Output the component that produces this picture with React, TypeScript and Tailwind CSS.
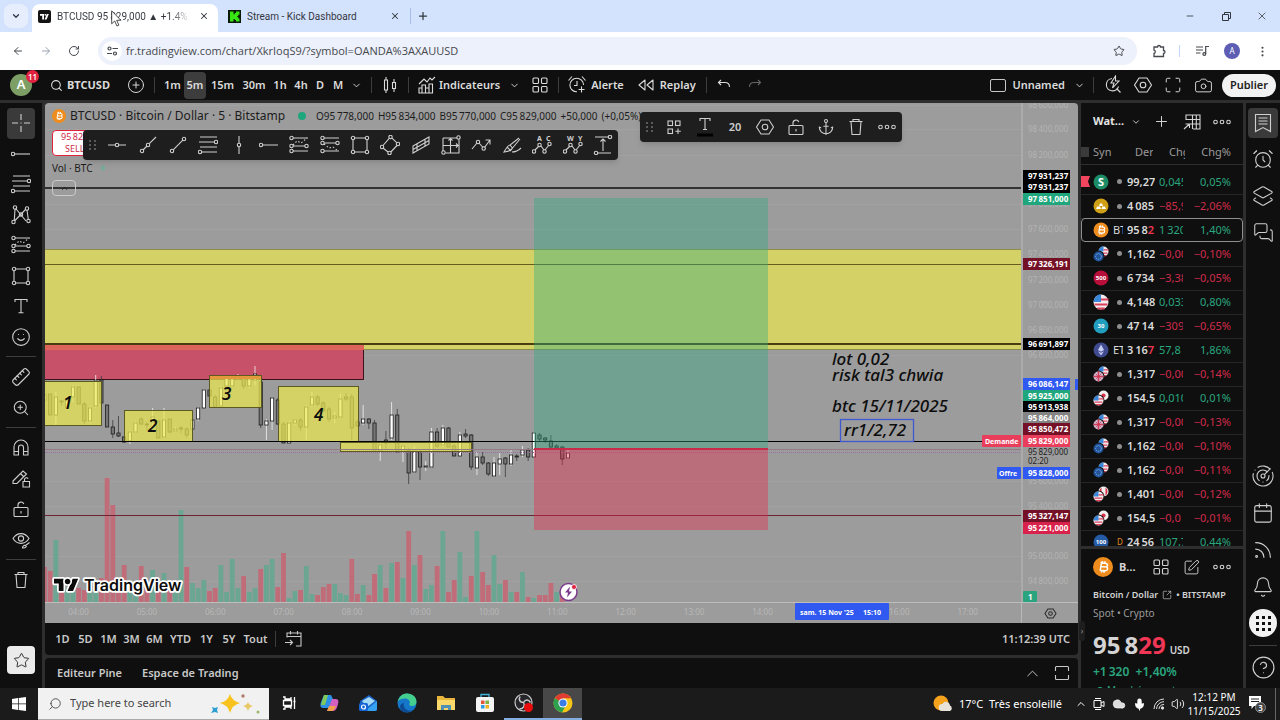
import type { ReactNode } from "react"
import {
  AlarmClock,
  Anchor,
  ArrowLeft,
  ArrowRight,
  Bell,
  Calendar,
  Camera,
  ChevronDown,
  ChevronUp,
  CirclePlus,
  CircleQuestionMark,
  Cloud,
  Layers2,
  LockOpen,
  Maximize,
  MessagesSquare,
  Mic,
  Minus,
  MoreVertical,
  Plus,
  Radar,
  RotateCw,
  Rss,
  Ruler,
  Search,
  Smile,
  SquareArrowOutUpRight,
  SquarePen,
  Star,
  Trash2,
  Volume2,
  X,
  ZoomIn,
} from "lucide-react"

const UP = "#6ba693"
const DOWN = "#c06c79"

// index, top of the bar, direction
const volumes: [number, number, string][] = [
  [0, 567, DOWN], [1, 571, DOWN], [2, 540, UP], [3, 590, DOWN], [4, 588, UP], [5, 592, UP], [6, 588, DOWN],
  [7, 590, DOWN], [8, 585, UP], [9, 590, UP], [10, 578, DOWN], [11, 478, DOWN], [12, 505, DOWN], [13, 586, DOWN],
  [14, 565, DOWN], [15, 592, UP], [16, 584, UP], [17, 566, DOWN], [18, 588, DOWN], [19, 570, UP], [20, 590, DOWN],
  [21, 573, UP], [22, 582, DOWN], [23, 590, UP], [24, 510, UP], [25, 567, DOWN], [26, 583, UP], [27, 588, UP],
  [28, 580, UP], [29, 591, DOWN], [30, 588, DOWN], [31, 565, UP], [32, 592, UP], [33, 559, UP], [34, 588, UP],
  [35, 576, DOWN], [36, 592, UP], [37, 588, UP], [38, 569, DOWN], [39, 565, UP], [40, 559, UP], [41, 587, DOWN],
  [42, 553, DOWN], [43, 598, UP], [44, 591, UP], [45, 590, DOWN], [46, 566, UP], [47, 594, UP], [48, 595, DOWN],
  [49, 587, DOWN], [50, 584, DOWN], [51, 584, UP], [52, 593, UP], [53, 595, UP], [54, 559, DOWN], [55, 594, DOWN],
  [56, 585, UP], [57, 595, DOWN], [58, 574, DOWN], [59, 565, UP], [60, 588, DOWN], [61, 563, UP], [62, 562, DOWN],
  [63, 578, UP], [64, 531, DOWN], [65, 565, UP], [66, 555, DOWN], [67, 589, UP], [68, 585, UP], [69, 566, DOWN],
  [70, 531, UP], [71, 592, DOWN], [72, 580, DOWN], [73, 552, UP], [74, 597, UP], [75, 576, DOWN], [76, 531, UP],
  [77, 572, DOWN], [78, 585, DOWN], [79, 555, UP], [80, 584, UP], [81, 580, DOWN], [82, 592, UP], [83, 592, DOWN],
  [84, 572, UP], [85, 597, DOWN], [86, 598, UP], [87, 595, DOWN], [88, 595, DOWN], [89, 583, DOWN], [90, 592, UP],
  [91, 594, DOWN],
]

// index, high, body top, body bottom, low, bullish
const candles: [number, number, number, number, number, boolean][] = [
  [0, 390, 395, 400, 402, true], [1, 394, 394, 415, 415, false], [2, 392, 397, 415, 425, true],
  [3, 400, 401, 402, 406, false], [4, 396, 400, 408, 410, true], [5, 385, 387, 397, 402, true],
  [6, 387, 387, 404, 404, false], [7, 402, 404, 421, 424, false], [8, 406, 408, 421, 423, true],
  [9, 375, 381, 406, 408, true], [10, 376, 380, 403, 403, false], [11, 405, 405, 427, 427, false],
  [12, 420, 427, 434, 438, false], [13, 416, 433, 436, 437, false], [14, 436, 437, 442, 443, false],
  [15, 430, 432, 441, 444, true], [16, 421, 423, 432, 433, true], [17, 417, 419, 424, 425, false],
  [18, 422, 424, 425, 431, false], [19, 408, 417, 422, 429, true], [20, 420, 421, 438, 438, false],
  [21, 408, 420, 437, 438, true], [22, 419, 419, 432, 433, false], [23, 427, 429, 431, 432, true],
  [24, 426, 428, 429, 433, false], [25, 427, 429, 435, 438, false], [26, 419, 420, 429, 440, true],
  [27, 407, 408, 419, 421, true], [28, 389, 390, 408, 408, true], [29, 390, 390, 396, 398, false],
  [30, 395, 397, 407, 407, false], [31, 386, 388, 406, 407, true], [32, 377, 378, 386, 388, true],
  [33, 377, 379, 386, 387, true], [34, 374, 377, 379, 380, true], [35, 377, 378, 386, 389, false],
  [36, 376, 379, 386, 388, true], [37, 366, 374, 380, 385, true], [38, 380, 382, 425, 428, false],
  [39, 419, 421, 425, 440, true], [40, 397, 398, 421, 430, true], [41, 398, 400, 424, 425, false],
  [42, 422, 424, 443, 443, false], [43, 421, 423, 443, 443, true], [44, 419, 420, 423, 425, true],
  [45, 418, 420, 427, 431, false], [46, 405, 407, 427, 440, true], [47, 392, 397, 405, 407, true],
  [48, 395, 397, 404, 406, false], [49, 401, 403, 411, 412, false], [50, 407, 409, 419, 422, false],
  [51, 412, 416, 418, 423, true], [52, 394, 399, 417, 418, true], [53, 393, 397, 399, 401, false],
  [54, 394, 397, 428, 440, false], [55, 420, 422, 426, 427, false], [56, 405, 419, 423, 425, true],
  [57, 418, 419, 423, 429, false], [58, 420, 423, 450, 450, false], [59, 443, 445, 451, 461, true],
  [60, 431, 440, 443, 450, false], [61, 402, 415, 438, 440, true], [62, 409, 415, 452, 453, false],
  [63, 445, 446, 451, 462, true], [64, 448, 450, 473, 484, false], [65, 446, 451, 472, 473, true],
  [66, 450, 452, 467, 480, false], [67, 461, 466, 467, 471, true], [68, 428, 432, 467, 468, true],
  [69, 428, 432, 446, 448, false], [70, 425, 428, 445, 447, true], [71, 427, 428, 447, 447, false],
  [72, 444, 446, 456, 456, false], [73, 432, 435, 456, 456, true], [74, 429, 434, 436, 438, false],
  [75, 434, 435, 467, 470, false], [76, 452, 457, 468, 475, true], [77, 452, 457, 463, 465, false],
  [78, 462, 463, 474, 476, false], [79, 457, 463, 476, 477, true], [80, 453, 459, 464, 475, true],
  [81, 457, 458, 464, 477, false], [82, 450, 455, 464, 466, true], [83, 454, 456, 457, 461, false],
  [84, 446, 450, 455, 457, true], [85, 448, 450, 457, 461, false], [86, 432, 433, 457, 457, true],
  [87, 433, 435, 439, 441, false], [88, 437, 438, 440, 443, false], [89, 435, 441, 447, 448, false],
  [90, 444, 446, 448, 448, false], [91, 446, 447, 459, 465, false], [92, 450, 453, 458, 459, true],
]

const gridPrices: [number, string][] = [
  [105, "98 600,000"], [129, "98 400,000"], [155, "98 200,000"], [204, "97 800,000"], [229, "97 600,000"],
  [254, "97 400,000"], [280, "97 200,000"], [305, "97 000,000"], [330, "96 800,000"], [355, "96 600,000"],
  [481, "95 600,000"], [506, "95 400,000"], [556, "95 000,000"], [581, "94 800,000"],
]

const priceTags: [number, string, string][] = [
  [176, "97 931,237", "#000"], [187, "97 931,237", "#000"], [199, "97 851,000", "#1fa67d"],
  [264, "97 326,191", "#741126"], [344, "96 691,897", "#000"], [384, "96 086,147", "#2f59f0"],
  [396, "95 925,000", "#1fa67d"], [407, "95 913,938", "#000"], [418, "95 864,000", "#848484"],
  [429, "95 850,472", "#741126"], [441, "95 829,000", "#e83e5c"], [473, "95 828,000", "#2f59f0"],
  [516, "95 327,147", "#741126"], [528, "95 221,000", "#d9224b"],
]

const hours = ["04:00", "05:00", "06:00", "07:00", "08:00", "09:00", "10:00", "11:00", "12:00", "13:00", "14:00", "", "16:00", "17:00"]

const watchlist = [
  { coin: "dxy", name: "", price: "99,27", chg: "0,045", pct: "0,05%", up: true },
  { coin: "gold", name: "", price: "4 085", chg: "−85,9", pct: "−2,06%", up: false },
  { coin: "btc", name: "BT", price: "95 8", tail: "2", chg: "1 320", pct: "1,40%", up: true },
  { coin: "eur", name: "", price: "1,162", chg: "−0,00", pct: "−0,10%", up: false },
  { coin: "500", name: "", price: "6 734", chg: "−3,38", pct: "−0,05%", up: false },
  { coin: "us", name: "", price: "4,148", chg: "0,033", pct: "0,80%", up: true },
  { coin: "30", name: "", price: "47 14", chg: "−309", pct: "−0,65%", up: false },
  { coin: "eth", name: "ET", price: "3 16", tail: "7", chg: "57,8", pct: "1,86%", up: true },
  { coin: "gbp", name: "", price: "1,317", chg: "−0,00", pct: "−0,14%", up: false },
  { coin: "jpy", name: "", price: "154,5", chg: "0,010", pct: "0,01%", up: true },
  { coin: "gbp", name: "", price: "1,317", chg: "−0,00", pct: "−0,13%", up: false },
  { coin: "eur", name: "", price: "1,162", chg: "−0,00", pct: "−0,10%", up: false },
  { coin: "eur", name: "", price: "1,162", chg: "−0,00", pct: "−0,11%", up: false },
  { coin: "cad", name: "", price: "1,401", chg: "−0,00", pct: "−0,12%", up: false },
  { coin: "jpy", name: "", price: "154,5", chg: "−0,0", pct: "−0,01%", up: false },
  { coin: "100", name: "D", price: "24 56", chg: "107,7", pct: "0,44%", up: true },
]

function Ico({ children, size = 20 }: { children: ReactNode; size?: number }) {
  return (
    <svg width={size} height={size} viewBox="0 0 20 20" fill="none" stroke="currentColor" strokeWidth="1.1">
      {children}
    </svg>
  )
}

function Dot({ x, y }: { x: number; y: number }) {
  return <circle cx={x} cy={y} r="1.7" />
}

const draw: Record<string, ReactNode> = {
  cross: <Ico><path d="M10 1v6M10 13v6M1 10h6M13 10h6M10 9.500v1" /></Ico>,
  hline: <Ico><path d="M1 10h7.300M11.700 10H19" /><Dot x={10} y={10} /></Ico>,
  ray: <Ico><path d="M5 15l4-4M11.300 8.700L18 2" /><Dot x={4} y={16} /><Dot x={10} y={10} /></Ico>,
  trend: <Ico><path d="M5.200 14.800L14.800 5.200" /><Dot x={4} y={16} /><Dot x={16} y={4} /></Ico>,
  fib: <Ico><path d="M2 2h17M1 7h15.300M2 12h17M3.700 17H19" /><Dot x={18} y={7} /><Dot x={2} y={17} /></Ico>,
  vline: <Ico><path d="M10 1v7.300M10 11.700V19" /><Dot x={10} y={10} /></Ico>,
  hray: <Ico><path d="M3.700 10H19" /><Dot x={2} y={10} /></Ico>,
  pattern: (
    <Ico>
      <path d="M4.700 3.500L15 16M3.300 15.500L4 4M4 15.500L14.500 4.500M16 5l1.300 9.500" />
      <Dot x={4} y={2.500} /><Dot x={16} y={3.500} /><Dot x={2.500} y={17} /><Dot x={17.500} y={16} /><Dot x={10} y={9.500} />
    </Ico>
  ),
  position: (
    <Ico>
      <path d="M4 3h15M4 11h12M4 16h15" /><path d="M4 10l4-4 4 2 6-5" strokeDasharray="1.500 2" />
      <Dot x={2.500} y={3} /><Dot x={2.500} y={11} /><Dot x={2.500} y={16} /><Dot x={17.500} y={11} />
    </Ico>
  ),
  position2: (
    <Ico>
      <path d="M4 3h15M4 8h12M4 16h15" /><path d="M4 9l5 4 4-1 5 4" strokeDasharray="1.500 2" />
      <Dot x={2.500} y={3} /><Dot x={2.500} y={8} /><Dot x={2.500} y={16} /><Dot x={17.500} y={8} />
    </Ico>
  ),
  rect: (
    <Ico>
      <path d="M4.700 3h10.600M4.700 17h10.600M3 4.700v10.600M17 4.700v10.600" />
      <Dot x={3} y={3} /><Dot x={17} y={3} /><Dot x={3} y={17} /><Dot x={17} y={17} />
    </Ico>
  ),
  rotated: (
    <Ico>
      <path d="M3 10.500L9.200 3.300M12 3.200l4.700 4.500M17 10.500L10.800 17M8 17l-4.700-3.700" />
      <Dot x={10.500} y={2} /><Dot x={18} y={9} /><Dot x={2} y={12} /><Dot x={9.500} y={18} />
    </Ico>
  ),
  channel: <Ico><path d="M2 11L18 2v7L2 18zM2 14.500l16-9M6 8.700v7M14 4.300v7" /></Ico>,
  grid: (
    <Ico>
      <path d="M2 3h14M2 3v13M18 4.500V18H4.500M9.500 3v15M2 10.500h16" /><path d="M7.500 5.500l2-2 2 2M15 8.500l2 2-2 2" />
      <Dot x={17.500} y={2.500} /><Dot x={2.500} y={17.500} />
    </Ico>
  ),
  path: <Ico><path d="M1 14l5-6M8 8l4 4.500M13.500 12.500L19 5M14.500 5H19v4.500" /><Dot x={7} y={7} /><Dot x={12.700} y={13.500} /></Ico>,
  brush: <Ico><path d="M17 3L8 10l2.500 3L18 4M8 10c-2 0-3 2-6 7 5-1 7-1 8.500-4M5 12l4 4M10 17c4 0 6-1 9-4" /></Ico>,
  abc: (
    <Ico>
      <path d="M3 15l4-4M9 11l3 4M13 15l4-5" />
      <Dot x={2} y={16.500} /><Dot x={7.500} y={10} /><Dot x={12.500} y={16.500} /><Dot x={17.500} y={9} />
      <text x="5" y="6" fontSize="7" fontWeight="700" fill="currentColor" stroke="none">A</text>
      <text x="14" y="6" fontSize="7" fontWeight="700" fill="currentColor" stroke="none">C</text>
    </Ico>
  ),
  wxy: (
    <Ico>
      <path d="M3 15l4-4M9 11l3 4M13 15l4-5" />
      <Dot x={2} y={16.500} /><Dot x={7.500} y={10} /><Dot x={12.500} y={16.500} /><Dot x={17.500} y={9} />
      <text x="4" y="6" fontSize="7" fontWeight="700" fill="currentColor" stroke="none">W</text>
      <text x="15" y="6" fontSize="7" fontWeight="700" fill="currentColor" stroke="none">Y</text>
    </Ico>
  ),
  range: <Ico><path d="M2 2h13.500M4.500 18H18M10 16V4M7.500 6.500L10 4l2.500 2.500" /><Dot x={17} y={2} /><Dot x={3} y={18} /></Ico>,
  text: <Ico><path d="M4 6V3.500h12V6M10 3.500v13M7.500 16.700h5" /></Ico>,
  magnet: <Ico><path d="M3 17V9a7 7 0 0 1 14 0v8h-4.500V9.500a2.500 2.500 0 0 0-5 0V17zM3 13.500h4.500M12.500 13.500H17" /></Ico>,
  pencilLock: (
    <Ico>
      <path d="M2 12L12 2l3.500 3-9.500 9.500H2zM9.500 4.500L13 8M12 12.500h6.500V18H12zM13.500 12.500V10.500a2 2 0 0 1 3.700-.8" />
    </Ico>
  ),
  lock: <Ico><rect x="3" y="8.500" width="14" height="9" rx="1" /><path d="M7 8.500V6a3 3 0 0 1 5.800-1M10 12v2.500" /></Ico>,
  eye: (
    <Ico>
      <path d="M2 8.500C6 2 14 2 18 8.500c-4 6.500-12 6.500-16 0zM11.500 18c0-2 1.500-3 3-2.500s1 2.500-3 2.500zM14.500 15.500l4-3" />
      <circle cx="10" cy="8.500" r="2.600" />
    </Ico>
  ),
  trash: <Ico><path d="M3.500 4.500h13M7 4.500V2.500h6v2M5 4.500l1 13h8l1-13" /></Ico>,
  apps: <Ico><rect x="3" y="3" width="5.500" height="5.500" rx="1" /><rect x="11.500" y="3" width="5.500" height="5.500" rx="1" /><rect x="3" y="11.500" width="5.500" height="5.500" rx="1" /><rect x="11.500" y="11.500" width="5.500" height="5.500" rx="1" /></Ico>,
  appsPlus: <Ico><rect x="4" y="4" width="4.500" height="4.500" /><rect x="11.500" y="4" width="4.500" height="4.500" /><rect x="4" y="12" width="4.500" height="4.500" /><path d="M14 11.500v5.500M11.300 14.200h5.500" /></Ico>,
  hex: <Ico><path d="M6 3h8l4.500 7-4.500 7H6l-4.500-7z" /><circle cx="10" cy="10" r="2.800" /></Ico>,
  dots: <Ico><circle cx="3.500" cy="10" r="1.800" /><circle cx="10" cy="10" r="1.800" /><circle cx="16.500" cy="10" r="1.800" /></Ico>,
  bars: <Ico><path d="M4.500 5h3v10h-3zM6 2v3M6 15v3M12.500 7.500h3v6h-3zM14 4v3.500M14 13.500V17" /></Ico>,
  indicators: <Ico><path d="M2 9l5-5 3 3 3-4 2 2 3-3M2 18v-5h3v-3h3.500v3H12V9h3.500v9zM5 13v5M8.500 13v5M12 12v6" /></Ico>,
  alarm: <Ico><path d="M16.500 10a6.800 6.800 0 1 0-6.500 6.800M10 6v4.500H7M1.500 5.500l3.500-4M15 1.500l3.500 4M14.500 11.500v6M11.500 14.500h6" /></Ico>,
  rewind: <Ico><path d="M9 5v10l-6-5zM17 5v10l-6-5z" strokeLinejoin="round" /></Ico>,
  undo: <Ico><path d="M7 5L4.500 7.500 7 10M5 7.500h6c3 0 4.500 1.500 4.500 4.500" /></Ico>,
  redo: <Ico><path d="M13 5l2.500 2.500L13 10M15 7.500H9c-3 0-4.500 1.500-4.500 4.500" /></Ico>,
  quick: <Ico><path d="M9 3.500a6.200 6.200 0 1 0 6.500 8M13.500 13.500l4 4M12.500 1L8 8h3l-1.500 5L16 6h-3.500z" /></Ico>,
  goTo: <Ico><path d="M3 8.500V4h14v13h-5M3 7.500h14M6.500 2v3.500M13.500 2v3.500M1 13.500h7M6 11l2.500 2.500L6 16" /></Ico>,
  table: <Ico><path d="M4 8V3h14v14h-7M4 7.500h14M10.500 3v14M14.300 3v14M8 12h10M2 17l5.500-5M3.500 12h4v4" /></Ico>,
}

function DrawButton({ name, label }: { name: string; label: string }) {
  return (
    <button type="button" aria-label={label} className="flex flex-1 items-center justify-center">
      {draw[name]}
    </button>
  )
}

function Grip() {
  return (
    <svg width="7" height="12" viewBox="0 0 7 12" fill="#5a5a5a">
      {[1, 5, 9].map((y) => (
        <g key={y}>
          <rect x="0" y={y} width="2" height="2" />
          <rect x="5" y={y} width="2" height="2" />
        </g>
      ))}
    </svg>
  )
}

function BrowserTabs() {
  return (
    <div className="flex h-8 shrink-0 items-center bg-[#d3e2fd] font-[Roboto,sans-serif] text-[10px] text-[#33373d]">
      <button type="button" aria-label="Search tabs" className="ml-1 flex h-6 w-6 items-center justify-center rounded-lg bg-[#e6eefd]">
        <ChevronDown size={10} strokeWidth={3} />
      </button>
      <div className="ml-1 flex h-full items-end">
        <div className="flex h-7 w-[186px] items-center rounded-t-lg bg-white pb-1 pl-1.5">
          <svg width="13" height="13" viewBox="0 0 13 13">
            <rect width="13" height="13" rx="2" fill="#131313" />
            <path d="M2 4h4v5.500H4.200V5.800H2zM8.600 9.500h-2L8.800 4h2z" fill="#fff" />
            <circle cx="7.300" cy="4.800" r=".9" fill="#fff" />
          </svg>
          <span className="ml-1.5 w-[134px] overflow-hidden bg-gradient-to-r from-[#33373d] from-85% to-transparent bg-clip-text whitespace-nowrap text-transparent">
            BTCUSD 95&#8201;829,000 ▲ +1.4% U
          </span>
          <button type="button" aria-label="Close tab" className="ml-2"><X size={10} strokeWidth={2.500} /></button>
        </div>
      </div>
      <div className="ml-2.5 flex w-[172px] items-center">
        <svg width="13" height="13" viewBox="0 0 13 13">
          <rect width="13" height="13" fill="#0b1a08" />
          <path d="M2 1.500h3.500v2.700h1.300V2.900H8V1.500h3.500v3.300h-1.300v1.400H9v.8h1.200v1.400h1.300v3.100H8v-1.400H6.800V8.900H5.500v2.600H2z" fill="#37e813" />
        </svg>
        <span className="ml-1.5 flex-1">Stream - Kick Dashboard</span>
        <button type="button" aria-label="Close tab"><X size={10} strokeWidth={2.500} /></button>
      </div>
      <button type="button" aria-label="New tab" className="ml-2.5 flex h-4 w-6 items-center justify-center border-l border-[#a9bfe8]">
        <Plus size={12} strokeWidth={2.500} />
      </button>
      <div className="ml-auto flex items-center">
        <button type="button" aria-label="Minimize" className="flex w-9 justify-center"><Minus size={10} /></button>
        <button type="button" aria-label="Restore" className="flex w-9 justify-center">
          <svg width="9" height="9" viewBox="0 0 9 9" fill="none" stroke="currentColor"><path d="M.5 2.500h6v6h-6zM2.500 2.500v-2h6v6h-2" /></svg>
        </button>
        <button type="button" aria-label="Close window" className="flex w-9 justify-center"><X size={12} strokeWidth={1.500} /></button>
      </div>
    </div>
  )
}

function AddressBar() {
  return (
    <div className="flex h-[38px] shrink-0 items-center bg-white text-[#45484d]">
      <button type="button" aria-label="Back" className="ml-1 flex w-7 justify-center"><ArrowLeft size={12} /></button>
      <button type="button" aria-label="Forward" className="flex w-7 justify-center text-gray-400"><ArrowRight size={12} /></button>
      <button type="button" aria-label="Reload" className="flex w-7 justify-center"><RotateCw size={12} /></button>
      <div className="ml-2.5 flex h-7 flex-1 items-center rounded-full bg-[#edf1fb] pr-3 pl-1">
        <span className="flex h-5 w-5 items-center justify-center rounded-full bg-white">
          <svg width="11" height="10" viewBox="0 0 11 10" fill="none" stroke="currentColor" strokeWidth="1.200">
            <path d="M5.500 2.500H11M0 7.500h5" /><circle cx="2.500" cy="2.500" r="1.500" /><circle cx="8" cy="7.500" r="1.500" />
          </svg>
        </span>
        <input aria-label="Address" className="ml-1 flex-1 bg-transparent font-['Open_Sans',sans-serif] text-[11px] outline-none" defaultValue="fr.tradingview.com/chart/XkrIoqS9/?symbol=OANDA%3AXAUUSD" />
        <Star size={12} />
      </div>
      <button type="button" aria-label="Extensions" className="ml-1.5 flex w-8 justify-center">
        <svg width="14" height="14" viewBox="0 0 14 14" fill="none" stroke="currentColor" strokeWidth="1.300">
          <path d="M2 3h3.500a1.500 1.500 0 0 1 3 0H11.500v3.500a1.500 1.500 0 0 1 0 3V12.500H2V9.500a1.700 1.700 0 0 0 0-3.300z" />
        </svg>
      </button>
      <span className="ml-1 h-3 w-px bg-[#c5d5f5]" />
      <button type="button" aria-label="Media" className="ml-1.5 flex w-8 justify-center">
        <svg width="13" height="12" viewBox="0 0 13 12" fill="none" stroke="currentColor" strokeWidth="1.200">
          <path d="M0 2h7M0 5h7M0 8h4.500M9.700 9V1.500H13" /><circle cx="8.300" cy="9" r="1.400" />
        </svg>
      </button>
      <span className="ml-1.5 flex h-4 w-4 items-center justify-center rounded-full bg-[#5c5db3] text-[8px] text-white">A</span>
      <button type="button" aria-label="Menu" className="ml-1 flex w-9 justify-center"><MoreVertical size={13} /></button>
    </div>
  )
}

function Divider() {
  return <span className="h-4 w-px shrink-0 bg-[#3d3d3d]" />
}

function TopBar() {
  return (
    <div className="flex h-[30px] shrink-0 items-center bg-[#0f0f0f] text-[11px] font-semibold text-[#dbdbdb]">
      <button type="button" aria-label="Account" className="relative ml-2.5 flex h-[22px] w-[22px] items-center justify-center rounded-full bg-[#7d9f66] text-[13px] text-white">
        A
        <span className="absolute -top-1 left-4 flex h-[13px] w-[13px] items-center justify-center rounded-full bg-[#e0223f] text-[8px]">11</span>
      </button>
      <button type="button" className="ml-[18px] flex items-center gap-1">
        <Search size={13} strokeWidth={2} /> <span className="w-[50px] text-left font-bold">BTCUSD</span>
      </button>
      <button type="button" aria-label="Compare" className="flex w-[37px] justify-center"><CirclePlus size={18} strokeWidth={1.300} /></button>
      <Divider />
      <div className="flex items-center pl-1.5">
        <button type="button" className="w-[23px]">1m</button>
        <button type="button" className="h-[27px] w-[22px] rounded bg-[#3d3d3d]">5m</button>
        <button type="button" className="w-[33px]">15m</button>
        <button type="button" className="w-[30px]">30m</button>
        <button type="button" className="w-[22px]">1h</button>
        <button type="button" className="w-[20px]">4h</button>
        <button type="button" className="w-[18px]">D</button>
        <button type="button" className="w-[18px]">M</button>
        <button type="button" aria-label="More intervals" className="flex w-[18px] justify-center"><ChevronDown size={11} /></button>
      </div>
      <span className="w-1.5" />
      <Divider />
      <button type="button" aria-label="Chart type" className="flex w-9 justify-center">{draw.bars}</button>
      <Divider />
      <button type="button" className="ml-2 flex items-center gap-0.5">{draw.indicators} Indicateurs</button>
      <button type="button" aria-label="Favourite indicators" className="flex w-7 justify-center"><ChevronDown size={11} /></button>
      <button type="button" aria-label="Templates" className="flex w-6 justify-center">{draw.apps}</button>
      <span className="w-1.5" />
      <Divider />
      <button type="button" className="ml-2 flex items-center gap-1">{draw.alarm} Alerte</button>
      <button type="button" className="ml-3 flex items-center gap-1">{draw.rewind} Replay</button>
      <span className="w-2.5" />
      <Divider />
      <button type="button" aria-label="Undo" className="ml-0.5 flex w-[30px] justify-center">{draw.undo}</button>
      <button type="button" aria-label="Redo" className="flex w-8 justify-center text-[#666]">{draw.redo}</button>
      <div className="ml-auto flex items-center">
        <label className="flex items-center gap-1.5">
          <input type="checkbox" className="h-[13px] w-4 appearance-none rounded-xs border border-[#c8c8c8]" />
          Unnamed
        </label>
        <button type="button" aria-label="Layouts" className="flex w-7 justify-center"><ChevronDown size={11} /></button>
        <Divider />
        <button type="button" aria-label="Quick search" className="ml-1 flex w-[30px] justify-center">{draw.quick}</button>
        <button type="button" aria-label="Settings" className="flex w-[30px] justify-center">{draw.hex}</button>
        <button type="button" aria-label="Fullscreen" className="flex w-[30px] justify-center"><Maximize size={18} strokeWidth={1.300} /></button>
        <button type="button" aria-label="Snapshot" className="flex w-[30px] justify-center"><Camera size={19} strokeWidth={1.200} /></button>
        <button type="button" className="mr-1 ml-1 h-[23px] w-[54px] rounded-full bg-[#f2f2f2] text-[11px] text-[#222]">Publier</button>
      </div>
    </div>
  )
}

function LeftBar() {
  return (
    <nav aria-label="Drawing tools" className="flex w-[42px] shrink-0 flex-col bg-[#0f0f0f] pt-[5px] text-[#cfcfcf]">
      <div className="flex h-61 flex-col px-[7px]">
        <button type="button" aria-label="Cross" className="flex flex-1 items-center justify-center rounded bg-[#3a3a3a]">{draw.cross}</button>
        <DrawButton name="hray" label="Trend lines" />
        <DrawButton name="fib" label="Fibonacci" />
        <DrawButton name="pattern" label="Patterns" />
        <DrawButton name="position" label="Forecasting" />
        <DrawButton name="rect" label="Shapes" />
        <DrawButton name="text" label="Text" />
        <button type="button" aria-label="Emoji" className="flex flex-1 items-center justify-center"><Smile size={20} strokeWidth={1.300} /></button>
      </div>
      <div className="mx-1.5 mt-1 mb-[5px] h-px bg-[#3d3d3d]" />
      <div className="flex h-[61px] flex-col">
        <button type="button" aria-label="Measure" className="flex flex-1 items-center justify-center"><Ruler size={20} strokeWidth={1.300} className="-scale-x-100" /></button>
        <button type="button" aria-label="Zoom in" className="flex flex-1 items-center justify-center"><ZoomIn size={18} strokeWidth={1.400} /></button>
      </div>
      <div className="mx-1.5 mt-1 mb-[5px] h-px bg-[#3d3d3d]" />
      <div className="flex h-[122px] flex-col">
        <DrawButton name="magnet" label="Magnet" />
        <DrawButton name="pencilLock" label="Stay in drawing mode" />
        <DrawButton name="lock" label="Lock drawings" />
        <DrawButton name="eye" label="Hide drawings" />
      </div>
      <div className="mx-1.5 mt-1 mb-[5px] h-px bg-[#3d3d3d]" />
      <button type="button" aria-label="Remove" className="flex h-[30px] items-center justify-center">{draw.trash}</button>
      <button type="button" aria-label="Favourites" className="mx-auto mt-auto mb-3.5 flex h-7 w-7 items-center justify-center rounded bg-[#ebebeb] text-[#222]">
        <Star size={17} strokeWidth={1.300} />
      </button>
    </nav>
  )
}

function Zone({ x, y, w, h }: { x: number; y: number; w: number; h: number }) {
  return <rect x={x + 0.5} y={y + 0.5} width={w} height={h} fill="#ece750" fillOpacity=".72" stroke="#5c5a20" />
}

function Plot() {
  const cx = (i: number) => 44.5 + i * 5.69
  return (
    <svg viewBox="45 103 976 499" preserveAspectRatio="xMinYMin slice" className="h-full min-w-0 flex-1 font-['Noto_Sans','Open_Sans',sans-serif]">
      {gridPrices.map(([y]) => (
        <path key={y} d={`M45 ${y}.5H1021`} stroke="#a2a2a2" />
      ))}
      {volumes.map(([i, y, color]) => (
        <rect key={i} x={cx(i) - 2.400} y={y} width="4.800" height={602 - y} fill={color} />
      ))}
      <path d="M45 188H1021" stroke="#333" strokeWidth="2" />
      <rect x="45" y="344" width="319" height="36" fill="#c65169" />
      <path d="M45 379.500H363.500V350" stroke="#3a1219" fill="none" />
      <rect x="45" y="250" width="976" height="99" fill="#d4d167" />
      <path d="M45 249.500H1021M45 349.500H1021" stroke="#8f8c48" />
      <rect x="45" y="345" width="319" height="5" fill="#dd6459" />
      <path d="M45 264.500H1021" stroke="#675c1c" />
      <path d="M45 344H1021" stroke="#4a3d12" strokeWidth="2" />
      {candles.map(([i, high, top, bottom, low, bull]) => (
        <g key={i}>
          <path d={`M${cx(i)} ${high}V${low}`} stroke={bull ? "#f4f4f4" : "#3c3c3c"} strokeWidth=".8" />
          <rect x={cx(i) - 1.600} y={top} width="3.200" height={Math.max(bottom - top, 1)} fill={bull ? "#fff" : "#777"} stroke="#1d1d1d" strokeWidth=".8" />
        </g>
      ))}
      <Zone x={44} y={381} w={57} h={44} />
      <Zone x={124} y={410} w={68} h={31} />
      <Zone x={209} y={375} w={52} h={32} />
      <Zone x={278} y={386} w={80} h={55} />
      <Zone x={340} y={442} w={131} h={9} />
      <path d="M210 376H261V379H210z" fill="#e39a3c" />
      <path d="M45 441.500H982" stroke="#000" />
      <path d="M45 449.500H1021" stroke="#927c84" />
      <path d="M45 452.500H1021" stroke="#9b6fa6" strokeDasharray="1 1" />
      <path d="M45 515.500H1021" stroke="#6c2434" />
      <rect x="534" y="198" width="234" height="250" fill="#33ad82" fillOpacity=".4" />
      <rect x="534" y="448" width="234" height="82" fill="#e82848" fillOpacity=".4" />
      <path d="M534 449H768" stroke="#c62c4a" strokeWidth="2" />
      <g fontSize="17" fontStyle="italic" fontWeight="500" fill="#0d0d0d">
        <text x="63" y="409" fontWeight="600">1</text>
        <text x="148" y="432" fontWeight="600">2</text>
        <text x="222" y="400" fontWeight="600">3</text>
        <text x="314" y="421" fontWeight="600">4</text>
        <text x="832" y="365">lot 0,02</text>
        <text x="832" y="381">risk tal3 chwia</text>
        <text x="832" y="412">btc 15/11/2025</text>
        <text x="844" y="436">rr1/2,72</text>
      </g>
      <rect x="840.500" y="419.500" width="73" height="22" fill="none" stroke="#3f5ad0" strokeWidth="1.300" />
      <g fontSize="7" fontWeight="700" fill="#fff">
        <rect x="982" y="435" width="39" height="12" rx="1" fill="#e83e5c" />
        <text x="985" y="444">Demande</text>
        <rect x="997" y="467" width="24" height="12" rx="1" fill="#2f59f0" />
        <text x="999" y="476">Offre</text>
      </g>
      <g transform="translate(54 576) scale(.68)" fill="#0b0b0b" stroke="#fff" strokeWidth="5" paintOrder="stroke" strokeLinejoin="round">
        <path d="M14 22H7V11H0V4h14v18zM28 22h-8l7.500-18h8L28 22z" />
        <circle cx="20" cy="8" r="4" />
      </g>
      <text x="84" y="591" className="font-['Inter',sans-serif]" fontSize="16" fontWeight="600" fill="#0b0b0b" stroke="#fff" strokeWidth="3.500" paintOrder="stroke" strokeLinejoin="round">
        TradingView
      </text>
      <circle cx="568.500" cy="592" r="8.500" fill="#fff" stroke="#7b3a8c" strokeWidth="1.500" />
      <path d="M570 586.500l-5 6h3l-1 5 5-6h-3z" fill="#7b3a8c" />
      <circle cx="574" cy="587" r="2.500" fill="#e0223f" stroke="#fff" strokeWidth=".8" />
    </svg>
  )
}

function PriceAxis() {
  return (
    <svg viewBox="1021 103 57 499" preserveAspectRatio="xMaxYMin slice" className="h-full w-[57px] shrink-0 font-['Noto_Sans',sans-serif]" fontSize="8">
      <path d="M1022 103V602" stroke="#b9b9b9" />
      {gridPrices.map(([y, label]) => (
        <text key={label} x="1028" y={y + 3} fill="#b4b4b4">{label.replace(" ", "\u2009")}</text>
      ))}
      {priceTags.map(([y, label, color], i) => (
        <g key={i}>
          <rect x="1023" y={y - 6} width="47" height="12" fill={color} />
          <text x="1028" y={y + 3} fontWeight="700" fill="#fff">{label.replace(" ", "\u2009")}</text>
        </g>
      ))}
      <text x="1028" y="455" fill="#1d1d1d">{"95\u2009829,000"}</text>
      <text x="1028" y="464" fill="#1d1d1d">02:20</text>
      <rect x="1023" y="591" width="14" height="11" rx="1" fill="#2aa37f" />
      <text x="1028" y="600" fontWeight="700" fill="#fff">1</text>
      <rect x="1075" y="379" width="3" height="11" fill="#2f59f0" />
    </svg>
  )
}

function TimeAxis() {
  return (
    <div className="flex h-[21px] shrink-0 border-t border-[#bdbdbd]">
      <svg viewBox="45 603 976 20" preserveAspectRatio="xMinYMin slice" className="h-full min-w-0 flex-1 font-['Noto_Sans',sans-serif]" fontSize="8">
        {hours.map((h, i) => (
          <text key={i} x={78.500 + i * 68.400} y="615" textAnchor="middle" fill="#b8b8b8">{h}</text>
        ))}
        <rect x="795" y="603" width="94" height="17" rx="1" fill="#2f59f0" />
        <g fontSize="7" fontWeight="700" fill="#fff">
          <text x="800" y="615">sam. 15 Nov '25</text>
          <text x="863" y="615">15:10</text>
        </g>
      </svg>
      <button type="button" aria-label="Axis settings" className="flex w-[57px] items-center justify-center border-l border-[#b9b9b9] text-[#2b2b2b]">
        <Ico size={13}>
          <path d="M6 3h8l4.500 7-4.500 7H6l-4.500-7z" strokeWidth="1.600" />
          <circle cx="10" cy="10" r="2.800" strokeWidth="1.600" />
        </Ico>
      </button>
    </div>
  )
}

function Legend() {
  return (
    <div className="absolute top-[5px] left-[7px] flex flex-col items-start text-[#1c1c1c]">
      <div className="flex items-center whitespace-nowrap">
        <svg width="14" height="14" viewBox="0 0 20 20"><circle cx="10" cy="10" r="10" fill="#ee8c1d" /><BitcoinB /></svg>
        <span className="ml-1 w-[220px] text-[12px] leading-4">BTCUSD · Bitcoin / Dollar · 5 · Bitstamp</span>
        <span className="ml-2 h-2 w-2 rounded-full bg-[#1fa67d]" />
        <span className="ml-2.5 flex gap-1 text-[10px]">
          <span>O95&#8201;778,000</span>
          <span>H95&#8201;834,000</span>
          <span>B95&#8201;770,000</span>
          <span>C95&#8201;829,000</span>
          <span>+50,000</span>
          <span>(+0,05%)</span>
        </span>
      </div>
      <div className="mt-1.5 flex gap-3">
        <button type="button" className="flex h-[26px] w-[60px] flex-col rounded border border-[#e0223f] bg-white pl-2 text-left text-[9px] leading-3 text-[#d02b49]">
          <span>95&#8201;828,000</span>
          <span className="pl-1">SELL</span>
        </button>
        <button type="button" aria-label="Buy" className="h-[26px] w-[46px] rounded border border-[#2f59f0] bg-white" />
      </div>
      <div className="mt-1 flex h-4 items-center gap-2 text-[10px]">
        Vol · BTC <span className="h-1.5 w-1 rounded-full bg-[#78a99a]" />
      </div>
      <button type="button" aria-label="Collapse legend" className="mt-1 flex h-4 w-6 items-center justify-center rounded-sm border border-[#c9c9c9]">
        <ChevronUp size={9} />
      </button>
    </div>
  )
}

function BitcoinB() {
  return (
    <path
      d="M7.500 5.500l5 .8c3 .8 2.500 3.200.3 3.500 2.500.5 2.400 4-1 4l-5-.6M8.500 5.800l-1.300 7.500M8 9.500l4.500.5M9.500 4v2M12 4.300v2M8.500 13v2.500M11 13.300v2.400"
      fill="none"
      stroke="#fff"
      strokeWidth="1.500"
    />
  )
}

function FloatingToolbars() {
  return (
    <>
      <div className="absolute top-[27px] left-[38px] flex h-[30px] w-[535px] items-center rounded bg-[#1e1e1e] pl-1.5 text-[#cfcfcf] shadow-md">
        <Grip />
        <div className="ml-1.5 flex flex-1">
          <DrawButton name="hline" label="Horizontal line" />
          <DrawButton name="ray" label="Ray" />
          <DrawButton name="trend" label="Trend line" />
          <DrawButton name="fib" label="Fib retracement" />
          <DrawButton name="vline" label="Vertical line" />
          <DrawButton name="hray" label="Horizontal ray" />
          <DrawButton name="position" label="Long position" />
          <DrawButton name="position2" label="Short position" />
          <DrawButton name="rect" label="Rectangle" />
          <DrawButton name="rotated" label="Rotated rectangle" />
          <DrawButton name="channel" label="Parallel channel" />
          <DrawButton name="grid" label="Date and price range" />
          <DrawButton name="path" label="Path" />
          <DrawButton name="brush" label="Highlighter" />
          <DrawButton name="abc" label="ABC correction" />
          <DrawButton name="wxy" label="WXY combo" />
          <DrawButton name="range" label="Price range" />
        </div>
      </div>
      <div className="absolute top-[9px] left-[595px] flex h-[30px] w-[262px] items-center rounded bg-[#1e1e1e] pl-1.5 text-[#cfcfcf] shadow-md">
        <Grip />
        <div className="ml-1.5 flex flex-1">
          <DrawButton name="appsPlus" label="Template" />
          <button type="button" aria-label="Text colour" className="flex flex-1 items-center justify-center">
            <Ico><path d="M5 4V1.500h10V4M10 1.500v11M8 12.500h4" /><path d="M2 18h16" stroke="#000" strokeWidth="3" /></Ico>
          </button>
          <button type="button" className="flex-1 text-[11px] font-semibold">20</button>
          <DrawButton name="hex" label="Settings" />
          <DrawButton name="lock" label="Lock" />
          <button type="button" aria-label="Anchor" className="flex flex-1 items-center justify-center"><Anchor size={18} strokeWidth={1.400} /></button>
          <DrawButton name="trash" label="Delete" />
          <DrawButton name="dots" label="More" />
        </div>
      </div>
    </>
  )
}

function BottomBars() {
  return (
    <>
      <div className="flex h-8 shrink-0 items-center rounded-b bg-[#0f0f0f] pl-1.5 text-[11px] font-semibold text-[#c9c9c9]">
        <button type="button" className="w-[23px]">1D</button>
        <button type="button" className="w-[23px]">5D</button>
        <button type="button" className="w-[23px]">1M</button>
        <button type="button" className="w-[23px]">3M</button>
        <button type="button" className="w-[23px]">6M</button>
        <button type="button" className="w-[29px]">YTD</button>
        <button type="button" className="w-[23px]">1Y</button>
        <button type="button" className="w-[22px]">5Y</button>
        <button type="button" className="w-[31px]">Tout</button>
        <span className="w-1" />
        <Divider />
        <button type="button" aria-label="Go to date" className="ml-2">{draw.goTo}</button>
        <span className="mr-2 ml-auto">11:12:39 UTC</span>
      </div>
      <div className="mt-[3px] flex flex-1 items-center rounded-t bg-[#0f0f0f] pl-3 text-[11px] font-semibold text-[#c9c9c9]">
        <button type="button">Editeur Pine</button>
        <button type="button" className="ml-5">Espace de Trading</button>
        <button type="button" aria-label="Open panel" className="ml-auto"><ChevronUp size={19} strokeWidth={1.200} /></button>
        <button type="button" aria-label="Maximize panel" className="mr-1.5 ml-2.5">
          <Ico><path d="M3.500 8V4.500a1 1 0 0 1 1-1h11a1 1 0 0 1 1 1V8M3.500 12v3.500a1 1 0 0 0 1 1h11a1 1 0 0 0 1-1V12" /></Ico>
        </button>
      </div>
    </>
  )
}

function Flag({ kind, x, y, r }: { kind: string; x: number; y: number; r: number }) {
  if (kind === "eu") {
    return (
      <g>
        <circle cx={x} cy={y} r={r} fill="#20559d" />
        <circle cx={x} cy={y} r={r - 2.200} fill="none" stroke="#9fc2e6" strokeDasharray="1 1" />
      </g>
    )
  }
  if (kind === "jp" || kind === "ca") {
    return (
      <g>
        <circle cx={x} cy={y} r={r} fill="#f2eeee" />
        {kind === "jp" ? <circle cx={x} cy={y} r={r / 2.500} fill="#d9304a" /> : <path d={`M${x + 2} ${y - r + 1}v${2 * r - 2}a${r} ${r} 0 0 0 0-${2 * r - 2}zM${x - 2} ${y - r + 1}v${2 * r - 2}a${r} ${r} 0 0 1 0-${2 * r - 2}z`} fill="#d9304a" />}
      </g>
    )
  }
  if (kind === "gb") {
    return (
      <g>
        <circle cx={x} cy={y} r={r} fill="#cfb9cc" />
        <path d={`M${x - r} ${y}h${2 * r}M${x} ${y - r}v${2 * r}`} stroke="#cf3a58" strokeWidth="1.600" />
        <path d={`M${x - 3} ${y - 3}l6 6M${x + 3} ${y - 3}l-6 6`} stroke="#cf3a58" strokeWidth=".7" />
      </g>
    )
  }
  return (
    <g>
      <circle cx={x} cy={y} r={r} fill="#f3ecee" />
      <path d={`M${x - r + 1} ${y + r / 3}h${2 * r - 2}M${x} ${y - r / 3}h${r}M${x - r / 2} ${y + r - 1}h${r}`} stroke="#d9405a" strokeWidth={r / 4} />
      <path d={`M${x} ${y - r}V${y}H${x - r}A${r} ${r} 0 0 1 ${x} ${y - r}z`} fill="#3a86d8" />
    </g>
  )
}

const pairs: Record<string, [string, string]> = {
  eur: ["eu", "us"],
  gbp: ["gb", "us"],
  jpy: ["us", "jp"],
  cad: ["us", "ca"],
}

function Coin({ coin }: { coin: string }) {
  const pair = pairs[coin]
  return (
    <svg width="16" height="16" viewBox="0 0 16 16" fontSize="6" fontWeight="700" textAnchor="middle">
      {pair && (
        <>
          <Flag kind={pair[1]} x={10.500} y={5.500} r={5} />
          <circle cx="5.500" cy="10.500" r="6" fill="#0f0f0f" />
          <Flag kind={pair[0]} x={5.500} y={10.500} r={5} />
        </>
      )}
      {coin === "us" && <Flag kind="us" x={8} y={8} r={7.500} />}
      {coin === "dxy" && <><circle cx="8" cy="8" r="7.500" fill="#1d8c66" /><text x="8" y="12" fontSize="11" fill="#fff">S</text></>}
      {coin === "gold" && <><circle cx="8" cy="8" r="7.500" fill="#cf9f16" /><path d="M6 8l1-2.500h2L10 8zM3 11l1-2.500h3L8 11zM8.500 11l1-2.500h2.500l1 2.500z" fill="#fff" /></>}
      {coin === "btc" && <><circle cx="8" cy="8" r="7.500" fill="#ee8c1d" /><g transform="scale(.8)"><BitcoinB /></g></>}
      {coin === "eth" && <><circle cx="8" cy="8" r="7.500" fill="#3f4a8f" /><path d="M8 2.500l3 5.500-3 1.800L5 8zM5 9.200l3 4.300 3-4.300-3 1.600z" fill="#c5cdf5" /></>}
      {coin === "500" && <><circle cx="8" cy="8" r="7.500" fill="#b80f3a" /><text x="8" y="10.200" fill="#fff">500</text></>}
      {coin === "30" && <><circle cx="8" cy="8" r="7.500" fill="#219dbd" /><text x="8" y="10.200" fill="#fff">30</text></>}
      {coin === "100" && <><circle cx="8" cy="8" r="7.500" fill="#255aa5" /><text x="8" y="10.200" fill="#fff">100</text></>}
    </svg>
  )
}

function Watchlist() {
  return (
    <section aria-label="Watchlist" className="flex h-[446px] shrink-0 flex-col overflow-hidden border-b-3 border-[#2e2e2e] bg-[#0f0f0f]">
      <div className="flex h-[37px] shrink-0 items-center pl-3 text-[#d4d4d4]">
        <button type="button" className="flex w-12 items-center justify-between text-[11px] font-bold text-[#e4e4e4]">
          Wat… <ChevronDown size={10} />
        </button>
        <button type="button" aria-label="Add symbol" className="ml-3"><Plus size={17} strokeWidth={1.400} /></button>
        <button type="button" aria-label="Table view" className="ml-3">{draw.table}</button>
        <button type="button" aria-label="More" className="ml-2.5">{draw.dots}</button>
      </div>
      <table className="w-full table-fixed border-collapse text-[11px]">
        <colgroup>
          <col className="w-8" />
          <col className="w-3.5" />
          <col className="w-8" />
          <col className="w-7" />
          <col />
        </colgroup>
        <thead>
          <tr className="h-6 border-b border-[#2e2e2e] text-left text-[11px] text-[#9b9b9b]">
            <th colSpan={2} className="p-0 font-normal">
              <span className="flex items-center gap-1"><span className="h-2.5 w-2 bg-[#3a3a3a]" />Syn</span>
            </th>
            <th className="p-0 pl-2 font-normal"><div className="w-[18px] overflow-hidden">Der</div></th>
            <th className="p-0 pl-2.5 font-normal"><div className="w-4 overflow-hidden">Chg</div></th>
            <th className="p-0 pr-3 text-right font-normal">Chg%</th>
          </tr>
        </thead>
        <tbody>
          <tr className="h-1.5"><td colSpan={5} className="p-0" /></tr>
          {watchlist.map((row, i) => (
            <tr
              key={i}
              className={row.coin === "btc" ? "h-6 rounded outline outline-1 -outline-offset-1 outline-[#8f8f8f]" : "h-6 border-b border-[#262626]"}
            >
              <td className="p-0">
                <div className="flex items-center">
                  <span className="w-3">
                    {i === 0 && <svg width="9" height="11" viewBox="0 0 9 11"><path d="M0 0h9L7 5.500 9 11H0z" fill="#f0455d" /></svg>}
                  </span>
                  <Coin coin={row.coin} />
                </div>
              </td>
              <td className="overflow-hidden p-0 text-[11px] text-[#dbdbdb]">
                {row.name === "" && <span className="ml-1 block h-[5px] w-[5px] rounded-full bg-[#8e8e8e]" />}
                {row.name === "D" && <span className="block pl-1 text-[8px] leading-4 text-[#e58a1f]">D</span>}
                {row.name.length > 1 && <div className="w-2.5 overflow-hidden">{row.name}</div>}
              </td>
              <td className="p-0 font-semibold text-[#dbdbdb]">
                <div className="w-7 overflow-hidden whitespace-nowrap">
                  {row.price.replace(" ", "\u2009")}
                  {row.tail && <span className="text-[#f23655]">{row.tail}</span>}
                </div>
              </td>
              <td className={row.up ? "p-0 text-[#2aa77f]" : "p-0 text-[#cf2b4a]"}>
                <div className="w-6 overflow-hidden whitespace-nowrap">{row.chg.replace(" ", "\u2009")}</div>
              </td>
              <td className={row.up ? "p-0 pr-3 text-right text-[#2aa77f]" : "p-0 pr-3 text-right text-[#cf2b4a]"}>{row.pct}</td>
            </tr>
          ))}
        </tbody>
      </table>
    </section>
  )
}

function Details() {
  return (
    <section aria-label="Details" className="min-h-0 flex-1 overflow-hidden bg-[#0f0f0f] pt-2 pl-3 text-[#d4d4d4]">
      <div className="flex h-5 items-center">
        <svg width="20" height="20" viewBox="0 0 20 20"><circle cx="10" cy="10" r="10" fill="#ee8c1d" /><BitcoinB /></svg>
        <span className="ml-1.5 w-8 text-[11px] font-bold">B…</span>
        <button type="button" aria-label="Apps">{draw.apps}</button>
        <button type="button" aria-label="Note" className="ml-3"><SquarePen size={17} strokeWidth={1.300} /></button>
        <button type="button" aria-label="More" className="ml-3">{draw.dots}</button>
      </div>
      <div className="mt-2.5 flex h-4 items-center gap-1 text-[9px] font-semibold whitespace-nowrap">
        Bitcoin / Dollar <SquareArrowOutUpRight size={10} strokeWidth={1.500} /> • BITSTAMP
      </div>
      <div className="mt-0.5 text-[10px] leading-4 text-[#9b9b9b]">Spot • Crypto</div>
      <div className="mt-2.5 flex items-baseline text-[24px] leading-7 font-bold">
        95&#8201;8<span className="text-[#f23655]">29</span>
        <span className="ml-1 text-[10px] font-semibold">USD</span>
      </div>
      <div className="text-[12px] leading-4 font-semibold text-[#2aa77f]">+1&#8201;320&nbsp; +1,40%</div>
      <div className="mt-0.5 ml-1 flex items-center gap-1 text-[10px] leading-4 text-[#2aa77f]">
        <span className="h-1.5 w-1.5 rounded-full bg-[#2aa77f]" /> Marché ouvert
      </div>
    </section>
  )
}

function RightBar() {
  return (
    <nav aria-label="Panels" className="flex w-[34px] shrink-0 flex-col items-center bg-[#0f0f0f] pt-[5px] text-[#cfcfcf]">
      <button type="button" aria-label="Watchlist" className="flex h-[30px] w-[30px] items-center justify-center rounded bg-[#3a3a3a]">
        <Ico><path d="M2.500 1.500h15v17l-7.500-4-7.500 4zM5.500 5h9M5.500 8h9M5.500 11h9" /></Ico>
      </button>
      <button type="button" aria-label="Alerts" className="mt-0.5 flex h-[37px] items-center"><AlarmClock size={22} strokeWidth={1.200} /></button>
      <button type="button" aria-label="Objects" className="flex h-[37px] items-center"><Layers2 size={22} strokeWidth={1.200} /></button>
      <button type="button" aria-label="Chats" className="flex h-[37px] items-center"><MessagesSquare size={21} strokeWidth={1.200} /></button>
      <div className="mt-auto flex flex-col items-center">
        <button type="button" aria-label="Screeners" className="flex h-[37px] items-center"><Radar size={24} strokeWidth={1.100} /></button>
        <button type="button" aria-label="Calendar" className="flex h-[37px] items-center"><Calendar size={22} strokeWidth={1.200} /></button>
        <button type="button" aria-label="News" className="flex h-[37px] items-center"><Rss size={22} strokeWidth={1.200} /></button>
        <button type="button" aria-label="Notifications" className="flex h-[37px] items-center"><Bell size={22} strokeWidth={1.200} /></button>
        <button type="button" aria-label="Products" className="my-1 flex h-7 w-7 items-center justify-center rounded-full bg-[#f2f2f2]">
          <svg width="15" height="15" viewBox="0 0 15 15" fill="#111">
            {[0, 6, 12].map((y) => [0, 6, 12].map((x) => <rect key={`${x}-${y}`} x={x} y={y} width="3" height="3" />))}
          </svg>
        </button>
        <span className="mt-1 h-px w-7 bg-[#3d3d3d]" />
        <button type="button" aria-label="Help" className="flex h-[42px] items-center"><CircleQuestionMark size={25} strokeWidth={1.100} /></button>
      </div>
    </nav>
  )
}

function TaskIcon({ label, className = "", children }: { label: string; className?: string; children: ReactNode }) {
  return (
    <button type="button" aria-label={label} className={`flex h-full w-[39px] items-center justify-center border-b-2 ${className || "border-transparent"}`}>
      <svg width="20" height="20" viewBox="0 0 20 20">{children}</svg>
    </button>
  )
}

function Taskbar() {
  return (
    <footer className="flex h-8 shrink-0 items-center bg-[#1b1b1b] text-white">
      <button type="button" aria-label="Start" className="flex w-[38px] justify-center">
        <svg width="14" height="14" viewBox="0 0 14 14" fill="#fff"><path d="M0 2l6-.9v5.500H0zM6.700 1L14 0v6.600H6.700zM0 7.300h6v5.600L0 12zM6.700 7.300H14V14l-7.300-1z" /></svg>
      </button>
      <label className="flex h-full w-[231px] items-center border-b border-[#aaa] bg-[#f1f1f1] pl-2.5 text-[#444]">
        <Search size={14} strokeWidth={1.500} className="-scale-x-100" />
        <input type="text" aria-label="Search" placeholder="Type here to search" className="ml-2 w-[140px] bg-transparent text-[11px] outline-none placeholder:text-[#444]" />
        <svg width="52" height="24" viewBox="0 0 52 24">
          <path d="M20 2q2 7 10 9-8 2-10 10-2-8-10-10 8-2 10-9z" fill="#f9c31f" />
          <path d="M38 10q1 3 5 4-4 1-5 5-1-4-5-5 4-1 5-4z" fill="#e8c766" />
          <path d="M2 15l3 1 3-1-1 3 1 3-3-1-4 1 2-3z" fill="#2d9fd0" />
          <circle cx="33" cy="4" r="1.700" fill="#b07a6a" />
          <circle cx="48" cy="20" r="1.500" fill="#9db86e" />
        </svg>
      </label>
      <TaskIcon label="Task view">
        <path d="M4 4h2v2h6V4M4 16h2v-2h6v2M4.500 7.500h8v5h-8zM15.500 4v12M14.500 8.500h2" fill="none" stroke="#fff" strokeWidth="1.300" />
      </TaskIcon>
      <span className="w-px" />
      <TaskIcon label="Copilot">
        <path d="M5 2h7l2 4-3 9H4c-3 0-3-3-2-6z" fill="#2b8fe6" />
        <path d="M3 8l2-6h4L6 12H2z" fill="#7fc95a" />
        <path d="M8 18h6c3 0 4-3 5-7s0-5-3-5h-3l-3 8z" fill="#d35fc0" />
        <path d="M8 18l2-5h7l-2 4-2 1z" fill="#f4a04a" />
      </TaskIcon>
      <TaskIcon label="Mail">
        <path d="M2 8l9-6 8 6v8a2 2 0 0 1-2 2H3z" fill="#1b62c4" />
        <path d="M4 8l7-4 6 4-8 6z" fill="#a7dcf8" />
        <path d="M19 8v8a2 2 0 0 1-2 2H7z" fill="#36a3f2" />
        <rect x="1" y="10" width="9" height="8" rx="1.500" fill="#1566d6" />
        <circle cx="5.500" cy="14" r="2" fill="none" stroke="#fff" strokeWidth="1.200" />
      </TaskIcon>
      <TaskIcon label="Edge">
        <circle cx="10" cy="10" r="9.500" fill="#1477c9" />
        <path d="M.5 9C2 3 6 .5 10 .5c6 0 9.500 4 9.500 8 0 3-2 4.500-4.500 4.500-2 0-3-.7-2.500-1.700C14 8 11 5.500 8 5.500 4 5.500 1.500 7 .5 9z" fill="#45cf8f" />
        <path d="M7 10c-1.500 5 3 8.500 8.500 7.300C12 20 7 20 4 17 2 14 3 10 7 10z" fill="#0d4c94" />
      </TaskIcon>
      <TaskIcon label="Explorer">
        <path d="M1 3h6l2 2h10v12H1z" fill="#e9b53a" />
        <path d="M1 7h18v10H1z" fill="#fbd86a" />
        <path d="M5 17v-5h10v5h-3v-2H8v2z" fill="#4f90b4" />
      </TaskIcon>
      <TaskIcon label="Store">
        <path d="M6 5V1.500h8V5" fill="none" stroke="#3fb4d8" strokeWidth="1.300" />
        <rect x="1" y="4" width="18" height="15" rx="2" fill="#f4f4f4" />
        <path d="M6 7.500h3.500V11H6z" fill="#e2553d" /><path d="M10.500 7.500H14V11h-3.500z" fill="#7cb342" />
        <path d="M6 12h3.500v3.500H6z" fill="#2f9be0" /><path d="M10.500 12H14v3.500h-3.500z" fill="#f2b21f" />
      </TaskIcon>
      <TaskIcon label="OBS" className="border-[#84aee0]">
        <circle cx="9.500" cy="9.500" r="8.500" fill="#26262a" stroke="#c9c9c9" strokeWidth="1.200" />
        <path d="M9.500 9.500c-4 0-5-3-3.500-6M9.500 9.500c2-3.500 5-3 7 0M9.500 9.500c2 3.500 0 6-4 6.500" fill="none" stroke="#c9c9c9" strokeWidth="1.500" />
        <circle cx="14.500" cy="14.500" r="4.500" fill="#e80c0c" />
      </TaskIcon>
      <TaskIcon label="Chrome" className="border-[#84aee0] bg-[#484848]">
        <circle cx="10" cy="10" r="9.500" fill="#f5c518" />
        <path d="M10 10L1.800 5.200A9.500 9.500 0 0 1 18.200 5.200H10z" fill="#e03c31" />
        <path d="M1.800 5.200A9.500 9.500 0 0 0 9 19.500l4-7.500-3-2z" fill="#2da14e" />
        <circle cx="10" cy="10" r="4.600" fill="#fff" /><circle cx="10" cy="10" r="3.600" fill="#3c7ce6" />
      </TaskIcon>
      <div className="ml-auto flex items-center">
        <svg width="20" height="18" viewBox="0 0 20 18"><circle cx="8" cy="8" r="7.500" fill="#f5a21c" /><path d="M9 16a3.500 3.500 0 0 1 .5-7 4 4 0 0 1 7.500 1.500A3 3 0 0 1 17 16z" fill="#e9e4da" /></svg>
        <span className="ml-1.5 w-[116px] text-[11px]">17°C&nbsp; Très ensoleillé</span>
        <ChevronUp size={12} className="mr-0.5" />
        <span className="flex w-5 justify-center">
          <svg width="12" height="14" viewBox="0 0 12 14" fill="none" stroke="#fff"><path d="M2 1.500h6M2 12.500h6M1 3.500h7v7H1zM8 6l3-1.500v5L8 8" /></svg>
        </span>
        <span className="flex w-5 justify-center"><Cloud size={14} fill="#ddd" strokeWidth={1} /></span>
        <span className="flex w-5 justify-center"><Mic size={13} fill="#fff" /></span>
        <span className="flex w-5 justify-center">
          <svg width="12" height="12" viewBox="0 0 12 12" fill="none" stroke="#ddd"><path d="M1 11A10 10 0 0 1 11 1M3.500 11A7.500 7.500 0 0 1 11 3.700M6 11a5 5 0 0 1 5-4.500" /><circle cx="9.500" cy="10" r="1.200" fill="#ddd" /></svg>
        </span>
        <span className="flex w-[18px] justify-center"><Volume2 size={14} strokeWidth={1.500} /></span>
        <span className="w-[54px] text-center text-[10px] leading-[14px]">12:12 PM<br />11/15/2025</span>
        <button type="button" aria-label="Notifications" className="mr-1.5 ml-1 flex w-6 justify-center">
          <svg width="18" height="20" viewBox="0 0 18 20">
            <path d="M1 2h12v10H6l-2.500 3v-3H1z" fill="#fff" /><path d="M3 5h8M3 7.500h8" stroke="#222" />
            <circle cx="12.500" cy="13.500" r="5" fill="#444" stroke="#8a8a8a" />
            <text x="12.500" y="16.500" textAnchor="middle" fontSize="8" fontWeight="600" fill="#fff">3</text>
          </svg>
        </button>
        <span className="mr-1 h-8 w-px bg-[#666]" />
      </div>
    </footer>
  )
}

export default function App() {
  return (
    <div className="relative flex h-screen flex-col overflow-hidden bg-[#2e2e2e] font-['Noto_Sans','Open_Sans',sans-serif]">
      <BrowserTabs />
      <AddressBar />
      <TopBar />
      <main className="mt-[3px] flex min-h-0 flex-1 gap-[3px]">
        <LeftBar />
        <div className="flex min-w-0 flex-1 flex-col">
          <div className="relative flex h-[520px] shrink-0 flex-col overflow-hidden rounded-t bg-[#9c9c9c]">
            <div className="flex min-h-0 flex-1">
              <Plot />
              <PriceAxis />
            </div>
            <TimeAxis />
            <Legend />
            <FloatingToolbars />
          </div>
          <BottomBars />
        </div>
        <aside className="relative flex w-[162px] shrink-0 flex-col">
          <Watchlist />
          <Details />
          <button type="button" aria-label="Collapse panel" className="absolute top-[518px] -left-0.5 flex h-5 w-1.5 items-center justify-center rounded bg-[#1e1e1e] text-[8px] text-[#999]">›</button>
        </aside>
        <RightBar />
      </main>
      <Taskbar />
      <svg width="12" height="18" viewBox="0 0 12 18" className="pointer-events-none absolute top-2.5 left-[111px]">
        <path d="M.7.800v13l3-2.800 2.200 5 2-.9-2.200-4.800h4.200z" fill="#fff" stroke="#222" strokeWidth=".8" />
      </svg>
    </div>
  )
}
